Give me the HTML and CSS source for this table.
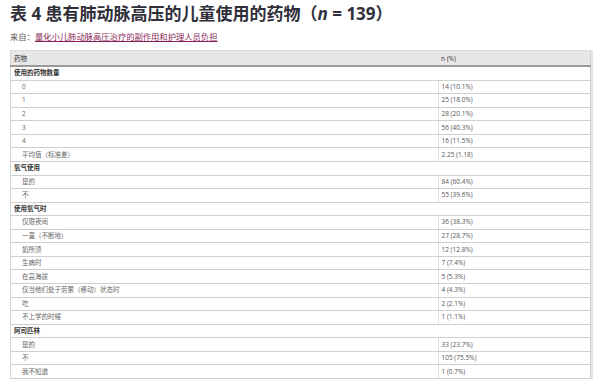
FILE: index.html
```html
<!DOCTYPE html>
<html lang="zh">
<head>
<meta charset="utf-8">
<link rel="stylesheet" href="styles.css">
</head>
<body>
<div class="page">
  <h1 class="title">表 4 患有肺动脉高压的儿童使用的药物（<i>n</i> = 139）</h1>
  <p class="source">来自：<a href="#" class="source-link">量化小儿肺动脉高压治疗的副作用和护理人员负担</a></p>
  <table class="data">
    <thead>
      <tr><th class="c1">药物</th><th class="c2">n (%)</th></tr>
    </thead>
    <tbody>
      <tr class="group"><td colspan="2">使用的药物数量</td></tr>
      <tr><td class="sub">0</td><td class="val">14 (10.1%)</td></tr>
      <tr><td class="sub">1</td><td class="val">25 (18.0%)</td></tr>
      <tr><td class="sub">2</td><td class="val">28 (20.1%)</td></tr>
      <tr><td class="sub">3</td><td class="val">56 (40.3%)</td></tr>
      <tr><td class="sub">4</td><td class="val">16 (11.5%)</td></tr>
      <tr><td class="sub">平均值（标准差）</td><td class="val">2.25 (1.18)</td></tr>
      <tr class="group"><td colspan="2">氧气使用</td></tr>
      <tr><td class="sub">是的</td><td class="val">84 (60.4%)</td></tr>
      <tr><td class="sub">不</td><td class="val">55 (39.6%)</td></tr>
      <tr class="group"><td colspan="2">使用氧气时</td></tr>
      <tr><td class="sub">仅限夜间</td><td class="val">36 (38.3%)</td></tr>
      <tr><td class="sub">一直（不断地）</td><td class="val">27 (28.7%)</td></tr>
      <tr><td class="sub">如所须</td><td class="val">12 (12.8%)</td></tr>
      <tr><td class="sub">生病时</td><td class="val">7 (7.4%)</td></tr>
      <tr><td class="sub">在高海拔</td><td class="val">5 (5.3%)</td></tr>
      <tr><td class="sub">仅当他们处于劳累（移动）状态时</td><td class="val">4 (4.3%)</td></tr>
      <tr><td class="sub">吃</td><td class="val">2 (2.1%)</td></tr>
      <tr><td class="sub">不上学的时候</td><td class="val">1 (1.1%)</td></tr>
      <tr class="group"><td colspan="2">阿司匹林</td></tr>
      <tr><td class="sub">是的</td><td class="val">33 (23.7%)</td></tr>
      <tr><td class="sub">不</td><td class="val">105 (75.5%)</td></tr>
      <tr><td class="sub">我不知道</td><td class="val">1 (0.7%)</td></tr>
    </tbody>
  </table>
</div>
</body>
</html>
```
FILE: styles.css
```css
html, body {
  margin: 0;
  padding: 0;
  background: #ffffff;
}
.page {
  padding: 4px 0 0 10px;
  width: 581px;
  font-family: "Open Sans", "Noto Sans CJK SC", sans-serif;
}
.title {
  margin: 0;
  font-family: "Open Sans", "Noto Sans CJK SC", sans-serif;
  font-size: 17px;
  line-height: 20px;
  font-weight: 700;
  color: #2f2f3a;
  letter-spacing: 0;
}
.title i {
  font-style: italic;
}
.source {
  margin: 7px 0 0 0;
  font-size: 8.3px;
  line-height: 11px;
  color: #555555;
}
.source-link {
  color: #8a1f57;
  text-decoration: underline;
}
.data {
  margin-top: 8px;
  width: 581px;
  border-collapse: collapse;
  font-size: 6.5px;
  border-left: 1px solid #d4d4d4;
  border-right: 1px solid #d0d0d0;
  box-shadow: 2px 0 0 #e6e6e6;
}
.data th {
  background: #e7e7e7;
  font-weight: 400;
  color: #333333;
  text-align: left;
  height: 14px;
  padding: 0 3px;
  border-top: 1px solid #dcdcdc;
  border-bottom: 2px solid #9a9a9a;
}
.data th.c1 {
  width: 421px;
}
.data td {
  height: 12.57px;
  padding: 0 3px;
  border-bottom: 1px solid #cfcfcf;
  line-height: 12px;
  color: #666666;
}
.data tr.group td {
  font-weight: 700;
  color: #333333;
}
.data td.sub {
  padding-left: 11px;
}
.data td.val {
  border-left: 1px solid #dedede;
  color: #555555;
}
```
